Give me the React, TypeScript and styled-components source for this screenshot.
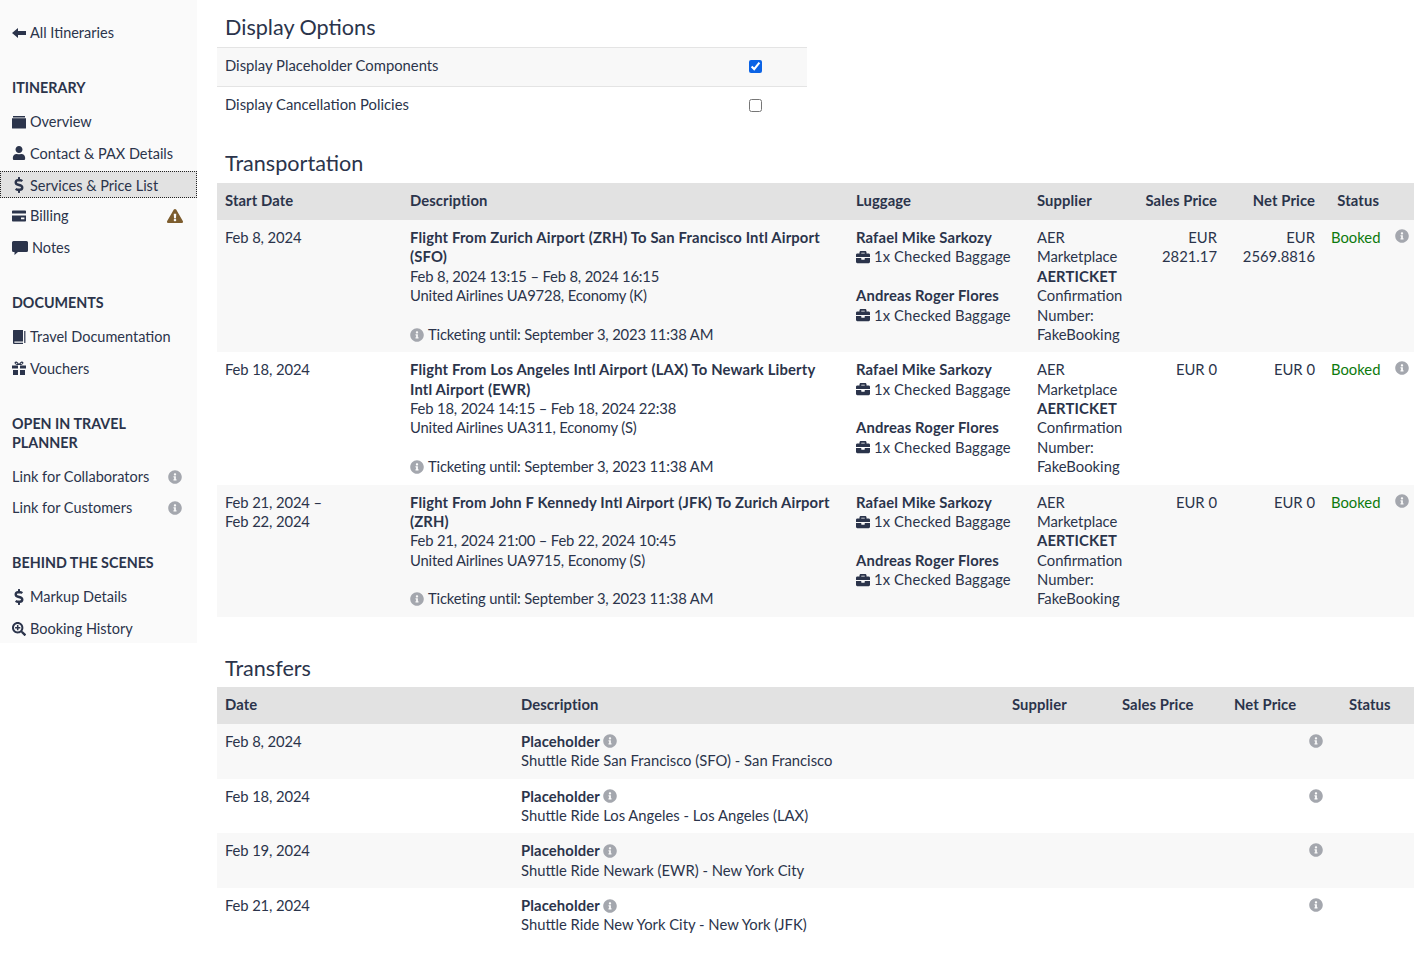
import React from "react";
import styled, { createGlobalStyle } from "styled-components";
import { FaUser, FaDollarSign, FaSearchPlus, FaInfoCircle, FaExclamationTriangle, FaBriefcase } from "react-icons/fa";

const Global = createGlobalStyle`
  html, body { margin: 0; padding: 0; background: #fff; }
  body {
    font-family: "Lato", "Open Sans", sans-serif;
    font-size: 14.8px;
    line-height: 19.38px;
    color: #2b344b;
  }
  * { box-sizing: border-box; }
`;

const Page = styled.div`
  display: flex;
  align-items: flex-start;
  width: 1414px;
  min-height: 963px;
`;

const Sidebar = styled.nav`
  width: 197px;
  flex: none;
  height: 643px;
  background: #fafafa;
  padding-top: 19px;
  font-size: 14.5px;
`;

const NavGroup = styled.div`
  margin-bottom: 31.7px;
`;

const NavHeading = styled.h4`
  margin: 0 12px 10.8px;
  font-size: 14.3px;
  line-height: 19.3px;
  font-weight: 700;
`;

const NavItem = styled.div<{ $active?: boolean }>`
  display: flex;
  align-items: center;
  height: 27.3px;
  margin-bottom: 4.2px;
  padding: ${(p) => (p.$active ? "1px" : "0")} 12px 0;
  background: ${(p) => (p.$active ? "#e2e2e2" : "transparent")};
  outline: ${(p) => (p.$active ? "1px dotted #222" : "none")};
  outline-offset: -1px;
  white-space: nowrap;
`;

const NavIcon = styled.span<{ $w?: number }>`
  display: inline-flex;
  justify-content: center;
  align-items: center;
  width: ${(p) => p.$w ?? 14}px;
  margin-right: 4px;
  flex: none;
  color: #2b344b;
  font-size: 14px;
`;

const NavEnd = styled.span<{ $color?: string }>`
  margin-left: auto;
  display: inline-flex;
  padding-right: ${(p) => (p.$color ? 2 : 3)}px;
  color: ${(p) => p.$color ?? "#a4a7ae"};
  font-size: 14px;
`;

const Main = styled.main`
  flex: 1;
  min-width: 0;
  padding: 14px 0 0 20px;
`;

const Title = styled.h3`
  margin: 0;
  padding-left: 8px;
  font-size: 21.6px;
  line-height: 26px;
  font-weight: 400;
`;

const Section = styled.section<{ $top?: number }>`
  margin-top: ${(p) => p.$top ?? 0}px;
`;

const Options = styled.div`
  width: 590px;
  margin-top: 7px;
`;

const OptionRow = styled.label<{ $shaded?: boolean }>`
  display: flex;
  height: 39px;
  padding: 8px 8px 0;
  border-top: 1px solid #e4e4e4;
  background: ${(p) => (p.$shaded ? "#f8f8f8" : "#fff")};
`;

const OptionText = styled.span`
  width: 524px;
`;

const Check = styled.input`
  width: 13px;
  height: 13px;
  margin: 4px 0 0;
  accent-color: #0b63e5;
`;

const Table = styled.table<{ $top: number }>`
  width: 1197px;
  margin-top: ${(p) => p.$top}px;
  border-collapse: collapse;
  table-layout: fixed;
`;

const HeadRow = styled.tr`
  background: #e2e2e2;
`;

const Th = styled.th<{ $w: number; $right?: boolean }>`
  width: ${(p) => p.$w}px;
  height: 37px;
  padding: 0 8px 2px;
  font-weight: 700;
  letter-spacing: 0.1px;
  text-align: ${(p) => (p.$right ? "right" : "left")};
`;

const Row = styled.tr`
  &:nth-child(odd) {
    background: #f8f8f8;
  }
`;

const Td = styled.td<{ $right?: boolean }>`
  padding: 8px;
  vertical-align: top;
  text-align: ${(p) => (p.$right ? "right" : "left")};
`;

const DateCell = styled(Td)`
  letter-spacing: -0.12px;
`;

const Strong = styled.div`
  font-weight: 700;
  letter-spacing: 0.16px;
`;

const Detail = styled.div`
  letter-spacing: -0.16px;
`;

const Spacer = styled.div`
  height: 19.38px;
`;

const Tick = styled(Detail)`
  display: flex;
  align-items: center;
  gap: 4px;
`;

const InfoIcon = styled(FaInfoCircle)`
  color: #a4a7ae;
  font-size: 14px;
  flex: none;
`;

const Bag = styled.div`
  display: flex;
  align-items: center;
  gap: 4px;
  white-space: nowrap;
  letter-spacing: 0.12px;
`;

const BagIcon = styled(FaBriefcase)`
  font-size: 14px;
  flex: none;
`;

const Booked = styled.span`
  color: #0d7a0d;
`;

const InfoCell = styled(Td)`
  padding: 8px 0 0 8px;
`;

const PlaceLine = styled.div`
  display: flex;
  align-items: center;
  gap: 3px;
`;

const PlaceName = styled.strong`
  letter-spacing: 0.12px;
`;

const RowInfo = styled(Td)`
  padding: 9px 18px 0 0;
  text-align: right;
`;

const Svg = styled.svg<{ $w?: number }>`
  width: ${(p) => p.$w ?? 14}px;
  height: 14px;
  fill: currentColor;
  flex: none;
`;

const ArrowGlyph = () => (
  <Svg viewBox="0 0 14 14"><path d="M0 7 6 2v3h8v4H6v3z" /></Svg>
);
const FolderGlyph = () => (
  <Svg viewBox="0 0 14 14"><path d="M1 1h12v1.5H1zM0 3.2h14V13a.6.6 0 0 1-.6.6H.6A.6.6 0 0 1 0 13z" /></Svg>
);
const CardGlyph = () => (
  <Svg viewBox="0 0 14 14"><path fillRule="evenodd" d="M.8 1.5h12.4a.8.8 0 0 1 .8.8v9.4a.8.8 0 0 1-.8.8H.8a.8.8 0 0 1-.8-.8V2.3a.8.8 0 0 1 .8-.8zM0 4.6v2h14v-2zM9 8.6v1.6h3.4V8.6z" /></Svg>
);
const CommentGlyph = () => (
  <Svg $w={16} viewBox="0 0 16 14"><path d="M1.500 0h13A1.500 1.500 0 0 1 16 1.500v8a1.500 1.500 0 0 1-1.500 1.500H6L2.500 14V11h-1A1.500 1.500 0 0 1 0 9.500v-8A1.500 1.500 0 0 1 1.500 0z" /></Svg>
);
const BookGlyph = () => (
  <Svg viewBox="0 0 14 14"><path d="M1.500 0H11v11.500H2.500a1 1 0 0 0 0 1.200H11V14H2a1 1 0 0 1-1-1V.8A.8.8 0 0 1 1.500 0zM12.200 1H13.400v12h-1.200z" /></Svg>
);
const GiftGlyph = () => (
  <Svg viewBox="0 0 14 14"><path fillRule="evenodd" d="M0 4.500h6V7.600H0zM8 4.500h6V7.600H8zM1 9h5v5H1zM8 9h5v5H8zM6.500 4C5 4 3 3.700 2.600 2.300 2.300 1 3.500.2 4.500.6c1 .4 2 1.700 2.500 2.500.5-.8 1.500-2.100 2.500-2.500 1-.4 2.200.4 1.900 1.700C11 3.700 9 4 7.500 4zM4.200 1.800c-.5-.1-.7.3-.4.600.4.400 1.300.6 1.800.6-.4-.5-.9-1.100-1.400-1.200zM9.800 1.800c.5-.1.700.3.400.6-.4.400-1.300.6-1.800.6.400-.5.900-1.100 1.400-1.200z" /></Svg>
);

const flights = [
  {
    date: ["Feb 8, 2024"],
    title: "Flight From Zurich Airport (ZRH) To San Francisco Intl Airport (SFO)",
    times: "Feb 8, 2024 13:15 – Feb 8, 2024 16:15",
    airline: "United Airlines UA9728, Economy (K)",
    sales: "EUR 2821.17",
    net: "EUR 2569.8816",
  },
  {
    date: ["Feb 18, 2024"],
    title: "Flight From Los Angeles Intl Airport (LAX) To Newark Liberty Intl Airport (EWR)",
    times: "Feb 18, 2024 14:15 – Feb 18, 2024 22:38",
    airline: "United Airlines UA311, Economy (S)",
    sales: "EUR 0",
    net: "EUR 0",
  },
  {
    date: ["Feb 21, 2024 –", "Feb 22, 2024"],
    title: "Flight From John F Kennedy Intl Airport (JFK) To Zurich Airport (ZRH)",
    times: "Feb 21, 2024 21:00 – Feb 22, 2024 10:45",
    airline: "United Airlines UA9715, Economy (S)",
    sales: "EUR 0",
    net: "EUR 0",
  },
];

const transfers = [
  ["Feb 8, 2024", "Shuttle Ride San Francisco (SFO) - San Francisco"],
  ["Feb 18, 2024", "Shuttle Ride Los Angeles - Los Angeles (LAX)"],
  ["Feb 19, 2024", "Shuttle Ride Newark (EWR) - New York City"],
  ["Feb 21, 2024", "Shuttle Ride New York City - New York (JFK)"],
];

export default function App() {
  return (
    <Page>
      <Global />
      <Sidebar>
        <NavGroup>
          <NavItem><NavIcon><ArrowGlyph /></NavIcon>All Itineraries</NavItem>
        </NavGroup>
        <NavGroup>
          <NavHeading>ITINERARY</NavHeading>
          <NavItem><NavIcon><FolderGlyph /></NavIcon>Overview</NavItem>
          <NavItem><NavIcon><FaUser /></NavIcon>Contact &amp; PAX Details</NavItem>
          <NavItem $active><NavIcon><FaDollarSign size={16} /></NavIcon>Services &amp; Price List</NavItem>
          <NavItem>
            <NavIcon><CardGlyph /></NavIcon>Billing
            <NavEnd $color="#7d5d2e"><FaExclamationTriangle size={16} /></NavEnd>
          </NavItem>
          <NavItem><NavIcon $w={16}><CommentGlyph /></NavIcon>Notes</NavItem>
        </NavGroup>
        <NavGroup>
          <NavHeading>DOCUMENTS</NavHeading>
          <NavItem><NavIcon><BookGlyph /></NavIcon>Travel Documentation</NavItem>
          <NavItem><NavIcon><GiftGlyph /></NavIcon>Vouchers</NavItem>
        </NavGroup>
        <NavGroup>
          <NavHeading>OPEN IN TRAVEL PLANNER</NavHeading>
          <NavItem>Link for Collaborators<NavEnd><FaInfoCircle /></NavEnd></NavItem>
          <NavItem>Link for Customers<NavEnd><FaInfoCircle /></NavEnd></NavItem>
        </NavGroup>
        <NavGroup>
          <NavHeading>BEHIND THE SCENES</NavHeading>
          <NavItem><NavIcon><FaDollarSign size={16} /></NavIcon>Markup Details</NavItem>
          <NavItem><NavIcon><FaSearchPlus /></NavIcon>Booking History</NavItem>
        </NavGroup>
      </Sidebar>
      <Main>
        <Section>
          <Title>Display Options</Title>
          <Options>
            <OptionRow $shaded>
              <OptionText>Display Placeholder Components</OptionText>
              <Check type="checkbox" defaultChecked />
            </OptionRow>
            <OptionRow>
              <OptionText>Display Cancellation Policies</OptionText>
              <Check type="checkbox" />
            </OptionRow>
          </Options>
        </Section>
        <Section $top={25}>
          <Title>Transportation</Title>
          <Table $top={7}>
            <thead>
              <HeadRow>
                <Th $w={185}>Start Date</Th>
                <Th $w={446}>Description</Th>
                <Th $w={181}>Luggage</Th>
                <Th $w={100}>Supplier</Th>
                <Th $w={96} $right>Sales Price</Th>
                <Th $w={98} $right>Net Price</Th>
                <Th $w={64} $right>Status</Th>
                <Th $w={27} />
              </HeadRow>
            </thead>
            <tbody>
              {flights.map((f) => (
                <Row key={f.title}>
                  <DateCell>{f.date.map((d) => <div key={d}>{d}</div>)}</DateCell>
                  <Td>
                    <Strong>{f.title}</Strong>
                    <Detail>{f.times}</Detail>
                    <Detail>{f.airline}</Detail>
                    <Spacer />
                    <Tick><InfoIcon />Ticketing until: September 3, 2023 11:38 AM</Tick>
                  </Td>
                  <Td>
                    <Strong>Rafael Mike Sarkozy</Strong>
                    <Bag><BagIcon />1x Checked Baggage</Bag>
                    <Spacer />
                    <Strong>Andreas Roger Flores</Strong>
                    <Bag><BagIcon />1x Checked Baggage</Bag>
                  </Td>
                  <Td>
                    AER Marketplace
                    <Strong>AERTICKET</Strong>
                    Confirmation Number: FakeBooking
                  </Td>
                  <Td $right>{f.sales}</Td>
                  <Td $right>{f.net}</Td>
                  <Td $right><Booked>Booked</Booked></Td>
                  <InfoCell><InfoIcon /></InfoCell>
                </Row>
              ))}
            </tbody>
          </Table>
        </Section>
        <Section $top={38}>
          <Title>Transfers</Title>
          <Table $top={6}>
            <thead>
              <HeadRow>
                <Th $w={296}>Date</Th>
                <Th $w={491}>Description</Th>
                <Th $w={110}>Supplier</Th>
                <Th $w={112}>Sales Price</Th>
                <Th $w={115}>Net Price</Th>
                <Th $w={73}>Status</Th>
              </HeadRow>
            </thead>
            <tbody>
              {transfers.map(([date, text]) => (
                <Row key={date}>
                  <DateCell>{date}</DateCell>
                  <Td>
                    <PlaceLine><PlaceName>Placeholder</PlaceName><InfoIcon /></PlaceLine>
                    {text}
                  </Td>
                  <Td />
                  <Td />
                  <RowInfo><InfoIcon /></RowInfo>
                  <Td />
                </Row>
              ))}
            </tbody>
          </Table>
        </Section>
      </Main>
    </Page>
  );
}
